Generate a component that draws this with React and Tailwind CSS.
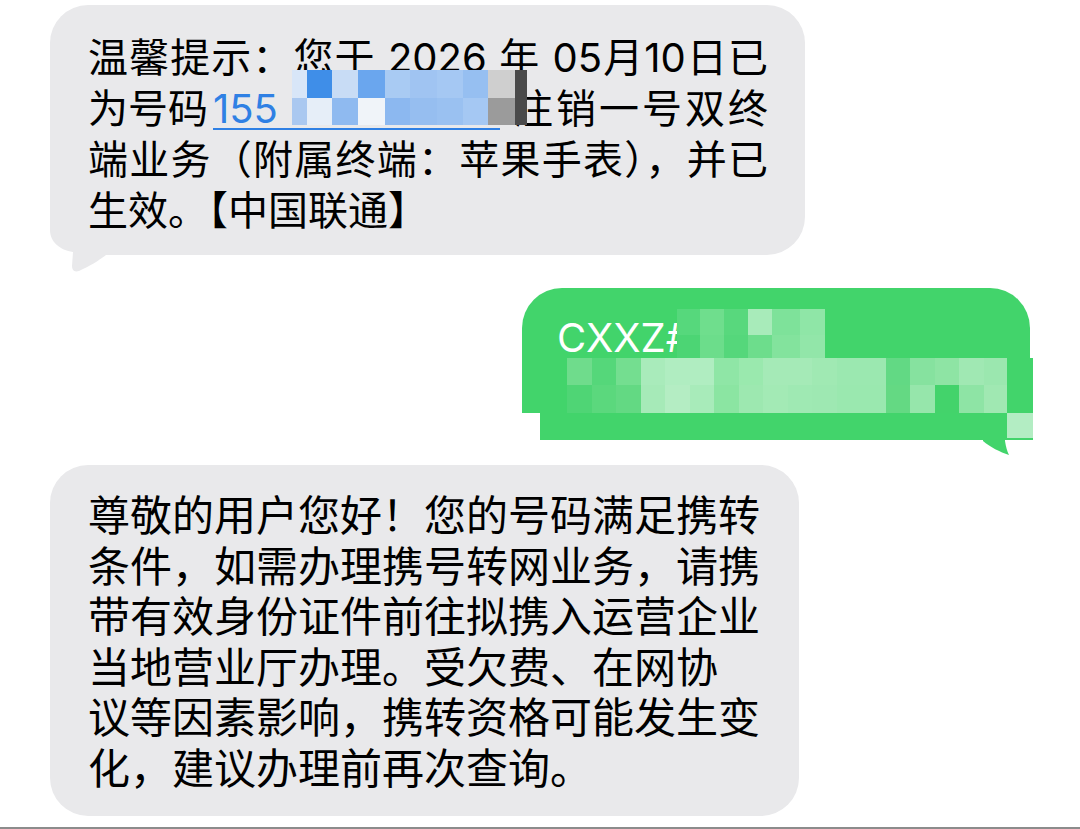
import React from "react";

const blueRow1 = [
  "w-[15px] bg-[#d8e6f8]",
  "w-[25px] bg-[#3f8ee8]",
  "w-[26px] bg-[#c8dcf5]",
  "w-[27px] bg-[#6aa6ee]",
  "w-[25px] bg-[#a9cbf3]",
  "w-[27px] bg-[#a0c4f2]",
  "w-[26px] bg-[#a5c8f3]",
  "w-[25px] bg-[#96bff1]",
  "w-[27px] bg-[#cfcfcf]",
  "w-[12px] bg-[#4a4a4a]",
];
const blueRow2 = [
  "w-[15px] bg-[#aac8f0]",
  "w-[25px] bg-[#e6eef8]",
  "w-[26px] bg-[#8fbaf0]",
  "w-[27px] bg-[#f0f4f9]",
  "w-[25px] bg-[#8cb8f0]",
  "w-[27px] bg-[#96bef0]",
  "w-[26px] bg-[#9ac1f1]",
  "w-[25px] bg-[#a5c8f3]",
  "w-[27px] bg-[#9b9b9b]",
  "w-[12px] bg-[#4a4a4a]",
];

const greenTop1 = [
  "w-[23px] bg-[#56d87c]",
  "w-[24px] bg-[#6fde8d]",
  "w-[24px] bg-[#58d87d]",
  "w-[24px] bg-[#a8ebba]",
  "w-[28px] bg-[#7ee29a]",
  "w-[25px] bg-[#8fe6a7]",
];
const greenTop2 = [
  "w-[23px] bg-[#4cd574]",
  "w-[24px] bg-[#6cdd8b]",
  "w-[24px] bg-[#55d77b]",
  "w-[24px] bg-[#6ddd8c]",
  "w-[28px] bg-[#83e39d]",
  "w-[25px] bg-[#92e6a9]",
];

const greenBot1 = [
  "w-[25px] bg-[#6fdc8c]",
  "w-[24px] bg-[#55d77a]",
  "w-[25px] bg-[#74de90]",
  "w-[24px] bg-[#a9ebbb]",
  "w-[25px] bg-[#b0edc1]",
  "w-[24px] bg-[#b0edc1]",
  "w-[25px] bg-[#8fe6a6]",
  "w-[24px] bg-[#9ae9ae]",
  "w-[25px] bg-[#a5eab7]",
  "w-[24px] bg-[#a5eab7]",
  "w-[25px] bg-[#a0e9b3]",
  "w-[24px] bg-[#9be8b0]",
  "w-[25px] bg-[#9be8b0]",
  "w-[24px] bg-[#62d984]",
  "w-[25px] bg-[#86e29f]",
  "w-[24px] bg-[#8ee4a4]",
  "w-[25px] bg-[#a0e8b3]",
  "w-[23px] bg-[#9be7af]",
];
const greenBot2 = [
  "w-[25px] bg-[#4fd575]",
  "w-[24px] bg-[#5bd87d]",
  "w-[25px] bg-[#63d983]",
  "w-[24px] bg-[#a6eab8]",
  "w-[25px] bg-[#b4edc3]",
  "w-[24px] bg-[#a8ebba]",
  "w-[25px] bg-[#8be5a2]",
  "w-[24px] bg-[#9de8b0]",
  "w-[25px] bg-[#a3eab5]",
  "w-[24px] bg-[#9fe9b3]",
  "w-[25px] bg-[#9ee8b2]",
  "w-[24px] bg-[#9ae8af]",
  "w-[25px] bg-[#9ae8af]",
  "w-[24px] bg-[#64d983]",
  "w-[25px] bg-[#96e6ab]",
  "w-[24px] bg-[#43d36b]",
  "w-[25px] bg-[#8ee4a5]",
  "w-[23px] bg-[#a0e8b2]",
];

function Row({ cells, h }) {
  return (
    <div className={`flex ${h}`}>
      {cells.map((c, i) => (
        <div key={i} className={`${c} h-full`} />
      ))}
    </div>
  );
}

export default function App() {
  return (
    <div className="w-[1080px] h-[829px] bg-white flex flex-col overflow-hidden text-black [font-family:'Inter','Noto_Sans_CJK_SC',sans-serif]">
      {/* Bubble 1 */}
      <div className="pt-[5px] pl-[50px]">
        <div className="relative w-[755px] h-[250px] rounded-[38px] bg-[#e9e9eb] pl-[38px] pt-[27px] text-[40px] leading-[51px]">
          <svg
            className="absolute left-0 top-[200px]"
            width="60"
            height="70"
            viewBox="0 0 60 70"
          >
            <path
              d="M0 10 L0 25 C0 37 10 45 23 47 L22 61 Q22 68 29 66 C40 61 48 56 56 50 L56 10 Z"
              fill="#e9e9eb"
            />
          </svg>
          <div className="relative w-[680px]">
            <div className="text-justify [text-align-last:justify]">
              温馨提示：您于 2026 年 05月10日已
            </div>
            <div className="flex whitespace-nowrap">
              <span>为号码</span>
              <span className="relative w-[305px] shrink-0 pl-[5px] text-[#2f80e4]">
                155
                <span className="absolute left-[5px] top-[45px] w-[287px] h-[2px] bg-[#2f80e4]" />
              </span>
              <span className="flex-1 text-justify [text-align-last:justify]">注销一号双终</span>
            </div>
            <div className="text-justify [text-align-last:justify]">
              端业务（附属终端：苹果手表），并已
            </div>
            <div className="whitespace-nowrap">生效。【中国联通】</div>
          </div>
          {/* mosaic over phone number */}
          <div className="absolute left-[242px] top-[65px] flex flex-col">
            <Row cells={blueRow1} h="h-[28px]" />
            <Row cells={blueRow2} h="h-[27px]" />
          </div>
        </div>
      </div>

      {/* Green bubble */}
      <div className="mt-[33px] flex justify-end pr-[47px]">
        <div className="relative w-[511px] h-[152px]">
          <div className="w-[508px] h-[125px] rounded-t-[40px] bg-[#42d46b] pl-[35px] pt-[25px] text-[40px] leading-[50px] text-white [font-family:'Inter',sans-serif]">
            CXXZ#
          </div>
          {/* top mosaic */}
          <div className="absolute left-[155px] top-[21px] flex flex-col">
            <Row cells={greenTop1} h="h-[26px]" />
            <Row cells={greenTop2} h="h-[25px]" />
          </div>
          {/* bottom mosaic band */}
          <div className="absolute left-[18px] top-[70px] w-[493px] h-[82px] bg-[#42d46b]">
            <div className="absolute left-[27px] top-0 flex flex-col">
              <Row cells={greenBot1} h="h-[27px]" />
              <Row cells={greenBot2} h="h-[28px]" />
            </div>
            <div className="absolute left-[467px] top-[55px] w-[26px] h-[25px] bg-[#b3edc3]" />
          </div>
          <svg
            className="absolute left-[455px] top-[150px]"
            width="40"
            height="20"
            viewBox="0 0 40 20"
          >
            <path
              d="M6 0 L28 0 L28 3 C29 9 30 13 32 17 C23 14 13 9 6 3 Z"
              fill="#42d46b"
            />
          </svg>
        </div>
      </div>

      {/* Bubble 3 */}
      <div className="mt-[25px] pl-[50px]">
        <div className="w-[749px] h-[351px] rounded-[38px] bg-[#e9e9eb] pl-[38px] pt-[26px] text-[42px] leading-[50.6px] whitespace-nowrap">
          <div>尊敬的用户您好！您的号码满足携转</div>
          <div>条件，如需办理携号转网业务，请携</div>
          <div>带有效身份证件前往拟携入运营企业</div>
          <div>当地营业厅办理。受欠费、在网协</div>
          <div>议等因素影响，携转资格可能发生变</div>
          <div>化，建议办理前再次查询。</div>
        </div>
      </div>

      <div className="mt-auto h-[2px] bg-[#8c8c8c]" />
    </div>
  );
}
